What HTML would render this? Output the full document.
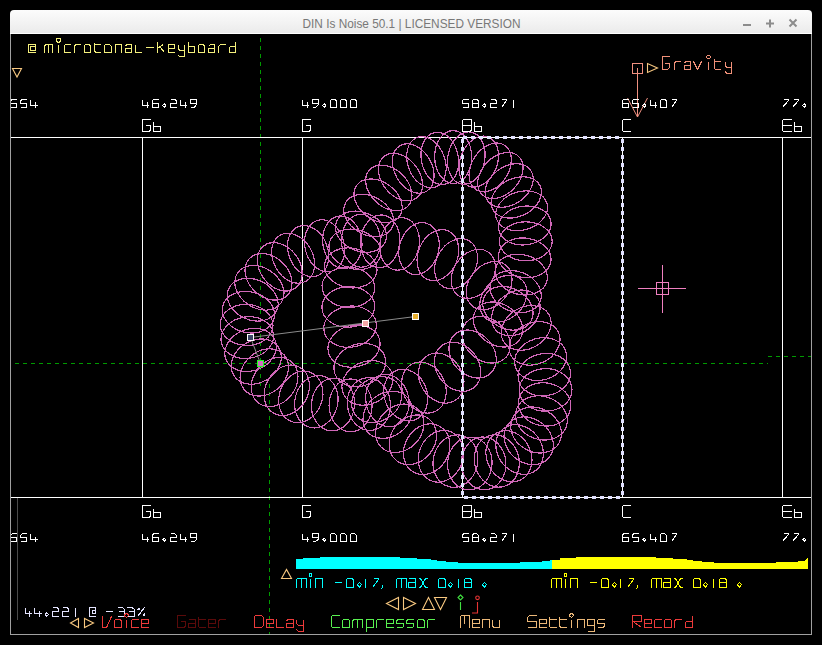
<!DOCTYPE html>
<html><head><meta charset="utf-8"><style>
html,body{margin:0;padding:0;background:#000;width:822px;height:645px;overflow:hidden}
svg{display:block}
</style></head><body>
<svg width="822" height="645" viewBox="0 0 822 645">
<rect width="822" height="645" fill="#000"/>
<defs><linearGradient id="tb" x1="0" y1="0" x2="0" y2="1"><stop offset="0" stop-color="#fcfcfc"/><stop offset="1" stop-color="#eaeaea"/></linearGradient><clipPath id="win"><rect x="11" y="34" width="800" height="600"/></clipPath></defs>
<path d="M10,34 V14 Q10,10 14,10 H808 Q812,10 812,14 V34 Z" fill="url(#tb)"/>
<rect x="10" y="33" width="802" height="1" fill="#ffffff"/>
<text x="302.5" y="28" font-family="Liberation Sans" font-size="12.8px" fill="#787878" textLength="218" lengthAdjust="spacingAndGlyphs">DIN Is Noise 50.1 | LICENSED VERSION</text>
<rect x="743" y="24" width="8" height="2" fill="#8c8c8c"/>
<path d="M770,19.5 V27.5 M766,23.5 H774" stroke="#8c8c8c" stroke-width="2"/>
<path d="M789.5,19.5 L796.5,26.5 M796.5,19.5 L789.5,26.5" stroke="#8c8c8c" stroke-width="2"/>
<rect x="10" y="34" width="1" height="601" fill="#a0a0a0"/>
<rect x="811" y="34" width="1" height="601" fill="#a0a0a0"/>
<rect x="10" y="634" width="802" height="1" fill="#a0a0a0"/>
<g clip-path="url(#win)">
<path d="M260.5,38 V386" stroke="#009a00" stroke-width="1" stroke-dasharray="4 4"/>
<path d="M269.5,384 V634" stroke="#009a00" stroke-width="1" stroke-dasharray="4 4"/>
<path d="M15,363.5 H768" stroke="#009a00" stroke-width="1" stroke-dasharray="4 4"/>
<path d="M768,356.5 H811" stroke="#009a00" stroke-width="1" stroke-dasharray="4 4"/>
<path d="M11,137.5 H811 M11,497.5 H811 M142.5,137 V497 M302.5,137 V497 M462.5,137 V497 M622.5,137 V497 M782.5,137 V497" stroke="#ffffff" stroke-width="1"/>
<rect x="17" y="498" width="1" height="122" fill="#4a4a4a"/>
<g fill="none" stroke="#d068b8" stroke-width="1.2" shape-rendering="crispEdges"><ellipse cx="437.9" cy="255.2" rx="19.7" ry="26.4" transform="rotate(22.1 437.9 255.2)"/><ellipse cx="456.1" cy="263.7" rx="19.8" ry="26.4" transform="rotate(27.9 456.1 263.7)"/><ellipse cx="473.3" cy="273.9" rx="19.9" ry="26.4" transform="rotate(33.7 473.3 273.9)"/><ellipse cx="489.1" cy="285.6" rx="20.1" ry="26.4" transform="rotate(39.6 489.1 285.6)"/><ellipse cx="503.4" cy="298.7" rx="20.2" ry="26.4" transform="rotate(45.6 503.4 298.7)"/><ellipse cx="515.8" cy="312.9" rx="20.4" ry="26.4" transform="rotate(51.9 515.8 312.9)"/><ellipse cx="526.2" cy="327.9" rx="20.6" ry="26.4" transform="rotate(58.5 526.2 327.9)"/><ellipse cx="534.5" cy="343.4" rx="20.7" ry="26.4" transform="rotate(65.4 534.5 343.4)"/><ellipse cx="540.6" cy="359.1" rx="20.9" ry="26.4" transform="rotate(72.8 540.6 359.1)"/><ellipse cx="544.3" cy="374.7" rx="21.1" ry="26.4" transform="rotate(80.7 544.3 374.7)"/><ellipse cx="545.6" cy="389.9" rx="21.3" ry="26.4" transform="rotate(89.3 545.6 389.9)"/><ellipse cx="544.6" cy="404.4" rx="21.5" ry="26.4" transform="rotate(98.5 544.6 404.4)"/><ellipse cx="541.4" cy="417.9" rx="21.6" ry="26.4" transform="rotate(108.5 541.4 417.9)"/><ellipse cx="536.1" cy="430.0" rx="21.8" ry="26.4" transform="rotate(119.1 536.1 430.0)"/><ellipse cx="528.7" cy="440.7" rx="21.9" ry="26.4" transform="rotate(130.3 528.7 440.7)"/><ellipse cx="519.6" cy="449.5" rx="22.0" ry="26.4" transform="rotate(141.7 519.6 449.5)"/><ellipse cx="508.9" cy="456.3" rx="22.1" ry="26.4" transform="rotate(153.2 508.9 456.3)"/><ellipse cx="496.8" cy="461.0" rx="22.2" ry="26.4" transform="rotate(164.3 496.8 461.0)"/><ellipse cx="483.7" cy="463.4" rx="22.2" ry="26.4" transform="rotate(174.8 483.7 463.4)"/><ellipse cx="469.8" cy="463.5" rx="22.2" ry="26.4" transform="rotate(-175.3 469.8 463.5)"/><ellipse cx="455.5" cy="461.1" rx="22.2" ry="26.4" transform="rotate(-166.1 455.5 461.1)"/><ellipse cx="441.0" cy="456.3" rx="22.1" ry="26.4" transform="rotate(-157.6 441.0 456.3)"/><ellipse cx="426.7" cy="449.2" rx="22.0" ry="26.4" transform="rotate(-149.7 426.7 449.2)"/><ellipse cx="412.8" cy="439.8" rx="21.9" ry="26.4" transform="rotate(-142.3 412.8 439.8)"/><ellipse cx="399.7" cy="428.3" rx="21.8" ry="26.4" transform="rotate(-135.3 399.7 428.3)"/><ellipse cx="387.6" cy="414.8" rx="21.6" ry="26.4" transform="rotate(-128.6 387.6 414.8)"/><ellipse cx="376.8" cy="399.6" rx="21.4" ry="26.4" transform="rotate(-122.3 376.8 399.6)"/><ellipse cx="367.4" cy="382.9" rx="21.2" ry="26.4" transform="rotate(-116.1 367.4 382.9)"/><ellipse cx="359.8" cy="365.0" rx="21.0" ry="26.4" transform="rotate(-110.1 359.8 365.0)"/><ellipse cx="354.0" cy="346.1" rx="20.8" ry="26.4" transform="rotate(-104.2 354.0 346.1)"/><ellipse cx="350.1" cy="326.7" rx="20.5" ry="26.4" transform="rotate(-98.3 350.1 326.7)"/><ellipse cx="348.3" cy="306.9" rx="20.3" ry="26.4" transform="rotate(-92.4 348.3 306.9)"/><ellipse cx="348.4" cy="287.2" rx="20.1" ry="26.4" transform="rotate(-86.4 348.4 287.2)"/><ellipse cx="350.7" cy="267.9" rx="19.8" ry="26.4" transform="rotate(-80.4 350.7 267.9)"/><ellipse cx="354.9" cy="249.3" rx="19.6" ry="26.4" transform="rotate(-74.2 354.9 249.3)"/><ellipse cx="360.9" cy="231.7" rx="19.4" ry="26.4" transform="rotate(-67.7 360.9 231.7)"/><ellipse cx="368.7" cy="215.5" rx="19.2" ry="26.4" transform="rotate(-61.0 368.7 215.5)"/><ellipse cx="378.1" cy="200.8" rx="19.0" ry="26.4" transform="rotate(-53.9 378.1 200.8)"/><ellipse cx="388.8" cy="187.9" rx="18.9" ry="26.4" transform="rotate(-46.4 388.8 187.9)"/><ellipse cx="400.5" cy="177.1" rx="18.8" ry="26.4" transform="rotate(-38.5 400.5 177.1)"/><ellipse cx="413.2" cy="168.5" rx="18.7" ry="26.4" transform="rotate(-29.9 413.2 168.5)"/><ellipse cx="426.4" cy="162.2" rx="18.6" ry="26.4" transform="rotate(-20.8 426.4 162.2)"/><ellipse cx="439.8" cy="158.4" rx="18.5" ry="26.4" transform="rotate(-11.0 439.8 158.4)"/><ellipse cx="453.2" cy="157.0" rx="18.5" ry="26.4" transform="rotate(-0.6 453.2 157.0)"/><ellipse cx="466.3" cy="158.1" rx="18.5" ry="26.4" transform="rotate(10.2 466.3 158.1)"/><ellipse cx="478.7" cy="161.6" rx="18.6" ry="26.4" transform="rotate(21.4 478.7 161.6)"/><ellipse cx="490.2" cy="167.4" rx="18.6" ry="26.4" transform="rotate(32.5 490.2 167.4)"/><ellipse cx="500.4" cy="175.5" rx="18.7" ry="26.4" transform="rotate(43.5 500.4 175.5)"/><ellipse cx="509.2" cy="185.5" rx="18.9" ry="26.4" transform="rotate(54.0 509.2 185.5)"/><ellipse cx="516.3" cy="197.4" rx="19.0" ry="26.4" transform="rotate(63.9 516.3 197.4)"/><ellipse cx="521.6" cy="210.8" rx="19.2" ry="26.4" transform="rotate(73.3 521.6 210.8)"/><ellipse cx="524.8" cy="225.5" rx="19.3" ry="26.4" transform="rotate(82.0 524.8 225.5)"/><ellipse cx="525.8" cy="241.3" rx="19.5" ry="26.4" transform="rotate(90.1 525.8 241.3)"/><ellipse cx="524.7" cy="257.8" rx="19.7" ry="26.4" transform="rotate(97.7 524.7 257.8)"/><ellipse cx="521.3" cy="274.6" rx="19.9" ry="26.4" transform="rotate(104.9 521.3 274.6)"/><ellipse cx="515.7" cy="291.6" rx="20.1" ry="26.4" transform="rotate(111.7 515.7 291.6)"/><ellipse cx="507.9" cy="308.3" rx="20.3" ry="26.4" transform="rotate(118.3 507.9 308.3)"/><ellipse cx="498.0" cy="324.5" rx="20.5" ry="26.4" transform="rotate(124.5 498.0 324.5)"/><ellipse cx="486.2" cy="339.8" rx="20.7" ry="26.4" transform="rotate(130.6 486.2 339.8)"/><ellipse cx="472.6" cy="354.0" rx="20.9" ry="26.4" transform="rotate(136.6 472.6 354.0)"/><ellipse cx="457.6" cy="366.8" rx="21.0" ry="26.4" transform="rotate(142.5 457.6 366.8)"/><ellipse cx="441.2" cy="378.1" rx="21.2" ry="26.4" transform="rotate(148.4 441.2 378.1)"/><ellipse cx="423.9" cy="387.6" rx="21.3" ry="26.4" transform="rotate(154.3 423.9 387.6)"/><ellipse cx="405.8" cy="395.1" rx="21.4" ry="26.4" transform="rotate(160.3 405.8 395.1)"/><ellipse cx="387.4" cy="400.6" rx="21.4" ry="26.4" transform="rotate(166.4 387.4 400.6)"/><ellipse cx="368.9" cy="404.1" rx="21.5" ry="26.4" transform="rotate(172.7 368.9 404.1)"/><ellipse cx="350.6" cy="405.3" rx="21.5" ry="26.4" transform="rotate(179.3 350.6 405.3)"/><ellipse cx="333.0" cy="404.5" rx="21.5" ry="26.4" transform="rotate(-173.9 333.0 404.5)"/><ellipse cx="316.3" cy="401.7" rx="21.4" ry="26.4" transform="rotate(-166.6 316.3 401.7)"/><ellipse cx="300.8" cy="396.9" rx="21.4" ry="26.4" transform="rotate(-158.8 300.8 396.9)"/><ellipse cx="286.8" cy="390.3" rx="21.3" ry="26.4" transform="rotate(-150.5 286.8 390.3)"/><ellipse cx="274.6" cy="382.0" rx="21.2" ry="26.4" transform="rotate(-141.5 274.6 382.0)"/><ellipse cx="264.3" cy="372.4" rx="21.1" ry="26.4" transform="rotate(-131.8 264.3 372.4)"/><ellipse cx="256.3" cy="361.6" rx="21.0" ry="26.4" transform="rotate(-121.4 256.3 361.6)"/><ellipse cx="250.6" cy="349.9" rx="20.8" ry="26.4" transform="rotate(-110.5 250.6 349.9)"/><ellipse cx="247.3" cy="337.6" rx="20.7" ry="26.4" transform="rotate(-99.1 247.3 337.6)"/><ellipse cx="246.6" cy="324.9" rx="20.5" ry="26.4" transform="rotate(-87.6 246.6 324.9)"/><ellipse cx="248.4" cy="312.2" rx="20.4" ry="26.4" transform="rotate(-76.4 248.4 312.2)"/><ellipse cx="252.7" cy="299.7" rx="20.2" ry="26.4" transform="rotate(-65.6 252.7 299.7)"/><ellipse cx="259.4" cy="287.8" rx="20.1" ry="26.4" transform="rotate(-55.4 259.4 287.8)"/><ellipse cx="268.5" cy="276.8" rx="19.9" ry="26.4" transform="rotate(-45.9 268.5 276.8)"/><ellipse cx="279.8" cy="266.8" rx="19.8" ry="26.4" transform="rotate(-37.2 279.8 266.8)"/><ellipse cx="293.1" cy="258.2" rx="19.7" ry="26.4" transform="rotate(-29.1 293.1 258.2)"/><ellipse cx="308.1" cy="251.1" rx="19.6" ry="26.4" transform="rotate(-21.5 308.1 251.1)"/><ellipse cx="324.6" cy="245.8" rx="19.6" ry="26.4" transform="rotate(-14.5 324.6 245.8)"/><ellipse cx="342.3" cy="242.3" rx="19.5" ry="26.4" transform="rotate(-7.8 342.3 242.3)"/><ellipse cx="361.0" cy="240.8" rx="19.5" ry="26.4" transform="rotate(-1.5 361.0 240.8)"/><ellipse cx="380.2" cy="241.3" rx="19.5" ry="26.4" transform="rotate(4.6 380.2 241.3)"/><ellipse cx="399.6" cy="243.9" rx="19.6" ry="26.4" transform="rotate(10.6 399.6 243.9)"/><ellipse cx="419.0" cy="248.6" rx="19.6" ry="26.4" transform="rotate(16.4 419.0 248.6)"/></g>
<path d="M462.5,139 V497.5 M462.5,137.5 H622.5 M622.5,139 V497.5 M464,497.5 H622.5" fill="none" stroke="#e0e0ff" stroke-width="3" stroke-dasharray="4 4" shape-rendering="crispEdges"/>
<path d="M250.5,337.5 L415.5,316.5 M250.5,337.5 L260.5,363.5" stroke="#8a8a8a" stroke-width="1"/>
<rect x="247.5" y="334.5" width="6" height="6" fill="#3c4466" stroke="#ffffff" stroke-width="1"/>
<rect x="257.5" y="360.5" width="6" height="6" fill="#d070c0" stroke="#20ff20" stroke-width="1"/>
<rect x="362.5" y="320.5" width="6" height="6" fill="#f4a8a8" stroke="#ffffff" stroke-width="1"/>
<rect x="412.5" y="313.5" width="6" height="6" fill="#e8b030" stroke="#ffffff" stroke-width="1"/>
<path d="M662.5,265 V313 M638,288.5 H686" stroke="#f080c0" stroke-width="1"/>
<rect x="656.5" y="282.5" width="12" height="12" fill="none" stroke="#f080c0" stroke-width="1"/>
<rect x="632.5" y="63.5" width="10" height="10" fill="none" stroke="#f09080" stroke-width="1"/>
<path d="M637.5,68 V117 M627.5,98 L637.5,117 L647.5,98" fill="none" stroke="#f09080" stroke-width="1"/>
<path d="M296,559.4 L303,559.4 L303,558 L320,558 L320,557 L400,557 L400,558 L417,558 L417,559 L431,559 L431,560 L437,560 L437,561 L446,561 L446,562 L458,562 L458,563 L520,563 L520,562 L535,562 L549,561 L551,559.5 L552,559.5 L552,569 L296,569 Z" fill="#00ffff" shape-rendering="crispEdges"/>
<path d="M552,559.5 L560,559.5 L560,558 L576,558 L576,557 L656,557 L656,558 L673,558 L673,559 L687,559 L687,560 L693,560 L693,561 L702,561 L702,562 L714,562 L714,563 L776,563 L776,562 L791,562 L805,561 L807,558 L808,558 L808,569 L552,569 Z" fill="#ffff00" shape-rendering="crispEdges"/>
<g fill="none" stroke="#f4f07c" stroke-width="1.1" stroke-linejoin="round" shape-rendering="crispEdges"><path d="M35.5,52.5 L28.5,52.5 L28.5,44.5 L35.5,44.5 L35.5,50.5 L30.5,50.5 L30.5,46.5 L35.5,46.5"/></g>
<g fill="none" stroke="#f4f07c" stroke-width="1.1" stroke-linejoin="round" shape-rendering="crispEdges"><path d="M44.5,52.5 L44.5,46.5 L45.5,44.5 L52.5,44.5 L52.5,52.5 M48.5,44.5 L48.5,52.5 M58.5,44.5 L58.5,52.5 M70.5,44.5 L65.5,44.5 L64.5,45.5 L64.5,52.5 L70.5,52.5 M74.5,52.5 L74.5,46.5 L75.5,44.5 L80.5,44.5 M84.5,44.5 L89.5,44.5 L90.5,46.5 L90.5,52.5 L84.5,52.5 L84.5,44.5 M94.5,42.5 L94.5,51.5 L96.5,52.5 L100.5,52.5 M94.5,44.5 L100.5,44.5 M104.5,44.5 L109.5,44.5 L111.5,46.5 L111.5,52.5 L104.5,52.5 L104.5,44.5 M115.5,52.5 L115.5,44.5 L121.5,44.5 L121.5,52.5 M125.5,46.5 L126.5,44.5 L131.5,44.5 L131.5,52.5 L125.5,52.5 L125.5,48.5 L131.5,48.5 M135.5,44.5 L135.5,52.5 L141.5,52.5 M145.5,47.5 L153.5,47.5 M157.5,41.5 L157.5,52.5 M163.5,44.5 L157.5,48.5 M160.5,47.5 L164.5,52.5 M168.5,48.5 L174.5,48.5 L174.5,44.5 L168.5,44.5 L168.5,52.5 L174.5,52.5 M178.5,44.5 L178.5,48.5 L179.5,50.5 L184.5,50.5 M184.5,44.5 L184.5,56.5 L179.5,56.5 L178.5,55.5 M188.5,41.5 L188.5,52.5 L194.5,52.5 L194.5,46.5 L188.5,46.5 M198.5,44.5 L203.5,44.5 L204.5,46.5 L204.5,52.5 L198.5,52.5 L198.5,44.5 M208.5,46.5 L210.5,44.5 L214.5,44.5 L214.5,52.5 L208.5,52.5 L208.5,48.5 L214.5,48.5 M218.5,52.5 L218.5,46.5 L220.5,44.5 L225.5,44.5 M235.5,41.5 L235.5,52.5 L229.5,52.5 L229.5,47.5 L230.5,46.5 L235.5,46.5"/><circle cx="58.5" cy="40.2" r="2.0"/></g>
<path d="M12.5,68.5 L21.5,68.5 L17,77 Z" fill="none" stroke="#f8c880" stroke-width="1.1"/>
<g fill="none" stroke="#ffffff" stroke-width="1.1" stroke-linejoin="round" shape-rendering="crispEdges"><path d="M16.5,99.5 L12.5,99.5 L10.5,100.5 L10.5,103.5 L16.5,103.5 L16.5,107.5 L10.5,107.5 M26.5,99.5 L22.5,99.5 L20.5,100.5 L20.5,103.5 L26.5,103.5 L26.5,107.5 L20.5,107.5 M30.5,99.5 L30.5,105.5 L37.5,105.5 M35.5,101.5 L35.5,107.5"/></g>
<g fill="none" stroke="#ffffff" stroke-width="1.1" stroke-linejoin="round" shape-rendering="crispEdges"><path d="M16.5,533.5 L12.5,533.5 L10.5,535.5 L10.5,537.5 L16.5,537.5 L16.5,541.5 L10.5,541.5 M26.5,533.5 L22.5,533.5 L20.5,535.5 L20.5,537.5 L26.5,537.5 L26.5,541.5 L20.5,541.5 M30.5,533.5 L30.5,539.5 L37.5,539.5 M35.5,536.5 L35.5,541.5"/></g>
<g fill="none" stroke="#ffffff" stroke-width="1.1" stroke-linejoin="round" shape-rendering="crispEdges"><path d="M142.5,99.5 L142.5,105.5 L148.5,105.5 M147.5,101.5 L147.5,107.5 M158.5,99.5 L153.5,99.5 L152.5,100.5 L152.5,107.5 L158.5,107.5 L158.5,103.5 L152.5,103.5 M164.5,103.5 L165.5,105.5 L164.5,107.5 L162.5,105.5 L164.5,103.5 M170.5,99.5 L174.5,99.5 L176.5,100.5 L176.5,103.5 L170.5,103.5 L170.5,107.5 L176.5,107.5 M180.5,99.5 L180.5,105.5 L186.5,105.5 M185.5,101.5 L185.5,107.5 M190.5,103.5 L190.5,99.5 L196.5,99.5 L196.5,104.5 L194.5,107.5 L190.5,107.5 M190.5,103.5 L196.5,103.5"/></g>
<g fill="none" stroke="#ffffff" stroke-width="1.1" stroke-linejoin="round" shape-rendering="crispEdges"><path d="M142.5,533.5 L142.5,539.5 L148.5,539.5 M147.5,536.5 L147.5,541.5 M158.5,533.5 L153.5,533.5 L152.5,535.5 L152.5,541.5 L158.5,541.5 L158.5,537.5 L152.5,537.5 M164.5,538.5 L165.5,539.5 L164.5,541.5 L162.5,539.5 L164.5,538.5 M170.5,533.5 L174.5,533.5 L176.5,535.5 L176.5,537.5 L170.5,537.5 L170.5,541.5 L176.5,541.5 M180.5,533.5 L180.5,539.5 L186.5,539.5 M185.5,536.5 L185.5,541.5 M190.5,537.5 L190.5,533.5 L196.5,533.5 L196.5,539.5 L194.5,541.5 L190.5,541.5 M190.5,537.5 L196.5,537.5"/></g>
<g fill="none" stroke="#ffffff" stroke-width="1.1" stroke-linejoin="round" shape-rendering="crispEdges"><path d="M302.5,99.5 L302.5,105.5 L308.5,105.5 M307.5,101.5 L307.5,107.5 M312.5,103.5 L312.5,99.5 L318.5,99.5 L318.5,104.5 L315.5,107.5 L312.5,107.5 M312.5,103.5 L318.5,103.5 M324.5,103.5 L325.5,105.5 L324.5,107.5 L322.5,105.5 L324.5,103.5 M330.5,99.5 L334.5,99.5 L336.5,100.5 L336.5,107.5 L330.5,107.5 L330.5,99.5 M340.5,99.5 L344.5,99.5 L346.5,100.5 L346.5,107.5 L340.5,107.5 L340.5,99.5 M350.5,99.5 L354.5,99.5 L356.5,100.5 L356.5,107.5 L350.5,107.5 L350.5,99.5"/></g>
<g fill="none" stroke="#ffffff" stroke-width="1.1" stroke-linejoin="round" shape-rendering="crispEdges"><path d="M302.5,533.5 L302.5,539.5 L308.5,539.5 M307.5,536.5 L307.5,541.5 M312.5,537.5 L312.5,533.5 L318.5,533.5 L318.5,539.5 L315.5,541.5 L312.5,541.5 M312.5,537.5 L318.5,537.5 M324.5,538.5 L325.5,539.5 L324.5,541.5 L322.5,539.5 L324.5,538.5 M330.5,533.5 L334.5,533.5 L336.5,535.5 L336.5,541.5 L330.5,541.5 L330.5,533.5 M340.5,533.5 L344.5,533.5 L346.5,535.5 L346.5,541.5 L340.5,541.5 L340.5,533.5 M350.5,533.5 L354.5,533.5 L356.5,535.5 L356.5,541.5 L350.5,541.5 L350.5,533.5"/></g>
<g fill="none" stroke="#ffffff" stroke-width="1.1" stroke-linejoin="round" shape-rendering="crispEdges"><path d="M468.5,99.5 L463.5,99.5 L462.5,100.5 L462.5,103.5 L468.5,103.5 L468.5,107.5 L462.5,107.5 M473.5,99.5 L476.5,99.5 L478.5,100.5 L478.5,107.5 L472.5,107.5 L472.5,100.5 L473.5,99.5 M472.5,103.5 L478.5,103.5 M484.5,103.5 L485.5,105.5 L484.5,107.5 L482.5,105.5 L484.5,103.5 M490.5,99.5 L494.5,99.5 L496.5,100.5 L496.5,103.5 L490.5,103.5 L490.5,107.5 L496.5,107.5 M501.5,99.5 L506.5,99.5 L506.5,100.5 L501.5,107.5 M513.5,99.5 L513.5,107.5"/></g>
<g fill="none" stroke="#ffffff" stroke-width="1.1" stroke-linejoin="round" shape-rendering="crispEdges"><path d="M468.5,533.5 L463.5,533.5 L462.5,535.5 L462.5,537.5 L468.5,537.5 L468.5,541.5 L462.5,541.5 M473.5,533.5 L476.5,533.5 L478.5,535.5 L478.5,541.5 L472.5,541.5 L472.5,535.5 L473.5,533.5 M472.5,537.5 L478.5,537.5 M484.5,538.5 L485.5,539.5 L484.5,541.5 L482.5,539.5 L484.5,538.5 M490.5,533.5 L494.5,533.5 L496.5,535.5 L496.5,537.5 L490.5,537.5 L490.5,541.5 L496.5,541.5 M501.5,533.5 L506.5,533.5 L506.5,534.5 L501.5,541.5 M513.5,533.5 L513.5,541.5"/></g>
<g fill="none" stroke="#ffffff" stroke-width="1.1" stroke-linejoin="round" shape-rendering="crispEdges"><path d="M628.5,99.5 L623.5,99.5 L622.5,100.5 L622.5,107.5 L628.5,107.5 L628.5,103.5 L622.5,103.5 M638.5,99.5 L633.5,99.5 L632.5,100.5 L632.5,103.5 L638.5,103.5 L638.5,107.5 L632.5,107.5 M644.5,103.5 L645.5,105.5 L644.5,107.5 L642.5,105.5 L644.5,103.5 M650.5,99.5 L650.5,105.5 L656.5,105.5 M655.5,101.5 L655.5,107.5 M660.5,99.5 L664.5,99.5 L666.5,100.5 L666.5,107.5 L660.5,107.5 L660.5,99.5 M671.5,99.5 L676.5,99.5 L676.5,100.5 L671.5,107.5"/></g>
<g fill="none" stroke="#ffffff" stroke-width="1.1" stroke-linejoin="round" shape-rendering="crispEdges"><path d="M628.5,533.5 L623.5,533.5 L622.5,535.5 L622.5,541.5 L628.5,541.5 L628.5,537.5 L622.5,537.5 M638.5,533.5 L633.5,533.5 L632.5,535.5 L632.5,537.5 L638.5,537.5 L638.5,541.5 L632.5,541.5 M644.5,538.5 L645.5,539.5 L644.5,541.5 L642.5,539.5 L644.5,538.5 M650.5,533.5 L650.5,539.5 L656.5,539.5 M655.5,536.5 L655.5,541.5 M660.5,533.5 L664.5,533.5 L666.5,535.5 L666.5,541.5 L660.5,541.5 L660.5,533.5 M671.5,533.5 L676.5,533.5 L676.5,534.5 L671.5,541.5"/></g>
<g fill="none" stroke="#ffffff" stroke-width="1.1" stroke-linejoin="round" shape-rendering="crispEdges"><path d="M783.5,99.5 L788.5,99.5 L788.5,100.5 L782.5,107.5 M793.5,99.5 L798.5,99.5 L798.5,100.5 L792.5,107.5 M804.5,103.5 L805.5,105.5 L804.5,107.5 L802.5,105.5 L804.5,103.5"/></g>
<g fill="none" stroke="#ffffff" stroke-width="1.1" stroke-linejoin="round" shape-rendering="crispEdges"><path d="M783.5,533.5 L788.5,533.5 L788.5,534.5 L782.5,541.5 M793.5,533.5 L798.5,533.5 L798.5,534.5 L792.5,541.5 M804.5,538.5 L805.5,539.5 L804.5,541.5 L802.5,539.5 L804.5,538.5"/></g>
<g fill="none" stroke="#ffffff" stroke-width="1.1" stroke-linejoin="round" shape-rendering="crispEdges"><path d="M150.5,119.5 L142.5,119.5 L142.5,131.5 L148.5,131.5 L150.5,130.5 L150.5,125.5 L145.5,125.5 M153.5,121.5 L153.5,131.5 L160.5,131.5 L160.5,126.5 L153.5,126.5"/></g>
<g fill="none" stroke="#ffffff" stroke-width="1.1" stroke-linejoin="round" shape-rendering="crispEdges"><path d="M150.5,505.5 L142.5,505.5 L142.5,517.5 L148.5,517.5 L150.5,516.5 L150.5,511.5 L145.5,511.5 M153.5,508.5 L153.5,517.5 L160.5,517.5 L160.5,512.5 L153.5,512.5"/></g>
<g fill="none" stroke="#ffffff" stroke-width="1.1" stroke-linejoin="round" shape-rendering="crispEdges"><path d="M310.5,119.5 L302.5,119.5 L302.5,131.5 L308.5,131.5 L310.5,130.5 L310.5,125.5 L305.5,125.5"/></g>
<g fill="none" stroke="#ffffff" stroke-width="1.1" stroke-linejoin="round" shape-rendering="crispEdges"><path d="M310.5,505.5 L302.5,505.5 L302.5,517.5 L308.5,517.5 L310.5,516.5 L310.5,511.5 L305.5,511.5"/></g>
<g fill="none" stroke="#ffffff" stroke-width="1.1" stroke-linejoin="round" shape-rendering="crispEdges"><path d="M462.5,119.5 L471.5,119.5 L471.5,130.5 L469.5,131.5 L462.5,131.5 L462.5,119.5 M462.5,125.5 L471.5,125.5 M474.5,121.5 L474.5,131.5 L481.5,131.5 L481.5,126.5 L474.5,126.5"/></g>
<g fill="none" stroke="#ffffff" stroke-width="1.1" stroke-linejoin="round" shape-rendering="crispEdges"><path d="M462.5,505.5 L471.5,505.5 L471.5,516.5 L469.5,517.5 L462.5,517.5 L462.5,505.5 M462.5,511.5 L471.5,511.5 M474.5,508.5 L474.5,517.5 L481.5,517.5 L481.5,512.5 L474.5,512.5"/></g>
<g fill="none" stroke="#ffffff" stroke-width="1.1" stroke-linejoin="round" shape-rendering="crispEdges"><path d="M630.5,119.5 L623.5,119.5 L622.5,120.5 L622.5,130.5 L623.5,131.5 L630.5,131.5"/></g>
<g fill="none" stroke="#ffffff" stroke-width="1.1" stroke-linejoin="round" shape-rendering="crispEdges"><path d="M630.5,505.5 L623.5,505.5 L622.5,506.5 L622.5,516.5 L623.5,517.5 L630.5,517.5"/></g>
<g fill="none" stroke="#ffffff" stroke-width="1.1" stroke-linejoin="round" shape-rendering="crispEdges"><path d="M791.5,119.5 L783.5,119.5 L782.5,120.5 L782.5,130.5 L783.5,131.5 L791.5,131.5 M782.5,125.5 L791.5,125.5 M794.5,121.5 L794.5,131.5 L801.5,131.5 L801.5,126.5 L794.5,126.5"/></g>
<g fill="none" stroke="#ffffff" stroke-width="1.1" stroke-linejoin="round" shape-rendering="crispEdges"><path d="M791.5,505.5 L783.5,505.5 L782.5,506.5 L782.5,516.5 L783.5,517.5 L791.5,517.5 M782.5,511.5 L791.5,511.5 M794.5,508.5 L794.5,517.5 L801.5,517.5 L801.5,512.5 L794.5,512.5"/></g>
<g fill="none" stroke="#f09078" stroke-width="1.1" stroke-linejoin="round" shape-rendering="crispEdges"><path d="M669.5,56.5 L662.5,56.5 L662.5,69.5 L667.5,69.5 L669.5,67.5 L669.5,63.5 L664.5,63.5 M674.5,69.5 L674.5,63.5 L675.5,61.5 L680.5,61.5 M684.5,63.5 L685.5,61.5 L690.5,61.5 L690.5,69.5 L684.5,69.5 L684.5,65.5 L690.5,65.5 M693.5,61.5 L697.5,69.5 L701.5,61.5 M708.5,61.5 L708.5,69.5 M714.5,58.5 L714.5,68.5 L715.5,69.5 L720.5,69.5 M714.5,61.5 L720.5,61.5 M725.5,61.5 L725.5,65.5 L726.5,67.5 L731.5,67.5 M731.5,61.5 L731.5,73.5 L726.5,73.5 L725.5,71.5"/><circle cx="708.5" cy="56.9" r="1.8"/></g>
<path d="M647.5,63.5 L647.5,72.5 L657.5,68 Z" fill="none" stroke="#f8c880" stroke-width="1.1"/>
<g fill="none" stroke="#00ffff" stroke-width="1.1" stroke-linejoin="round" shape-rendering="crispEdges"><path d="M296.5,587.5 L296.5,579.5 L297.5,578.5 L306.5,578.5 L306.5,587.5 M301.5,578.5 L301.5,587.5 M310.5,578.5 L310.5,587.5 M315.5,587.5 L315.5,578.5 L322.5,578.5 L322.5,587.5 M334.5,582.5 L341.5,582.5 M346.5,578.5 L351.5,578.5 L353.5,579.5 L353.5,587.5 L346.5,587.5 L346.5,578.5 M359.5,582.5 L361.5,584.5 L359.5,587.5 L357.5,584.5 L359.5,582.5 M365.5,578.5 L365.5,587.5 M373.5,578.5 L378.5,578.5 L378.5,579.5 L372.5,587.5 M382.5,584.5 L382.5,587.5 L380.5,589.5 M396.5,587.5 L396.5,579.5 L397.5,578.5 L406.5,578.5 L406.5,587.5 M401.5,578.5 L401.5,587.5 M408.5,579.5 L409.5,578.5 L415.5,578.5 L415.5,587.5 L408.5,587.5 L408.5,582.5 L415.5,582.5 M418.5,578.5 L420.5,578.5 L425.5,587.5 L427.5,587.5 M427.5,578.5 L425.5,578.5 L420.5,587.5 L418.5,587.5 M438.5,578.5 L443.5,578.5 L445.5,579.5 L445.5,587.5 L438.5,587.5 L438.5,578.5 M450.5,582.5 L452.5,584.5 L450.5,587.5 L448.5,584.5 L450.5,582.5 M458.5,578.5 L458.5,587.5 M465.5,578.5 L469.5,578.5 L471.5,579.5 L471.5,587.5 L464.5,587.5 L464.5,579.5 L465.5,578.5 M464.5,582.5 L471.5,582.5 M484.5,582.5 L486.5,584.5 L484.5,587.5 L482.5,584.5 L484.5,582.5"/><circle cx="310.5" cy="575.0" r="1.5"/></g>
<g fill="none" stroke="#ffff00" stroke-width="1.1" stroke-linejoin="round" shape-rendering="crispEdges"><path d="M551.5,587.5 L551.5,579.5 L552.5,578.5 L561.5,578.5 L561.5,587.5 M556.5,578.5 L556.5,587.5 M565.5,578.5 L565.5,587.5 M570.5,587.5 L570.5,578.5 L577.5,578.5 L577.5,587.5 M589.5,582.5 L596.5,582.5 M601.5,578.5 L606.5,578.5 L608.5,579.5 L608.5,587.5 L601.5,587.5 L601.5,578.5 M614.5,582.5 L616.5,584.5 L614.5,587.5 L612.5,584.5 L614.5,582.5 M620.5,578.5 L620.5,587.5 M628.5,578.5 L633.5,578.5 L633.5,579.5 L627.5,587.5 M637.5,584.5 L637.5,587.5 L635.5,589.5 M651.5,587.5 L651.5,579.5 L652.5,578.5 L661.5,578.5 L661.5,587.5 M656.5,578.5 L656.5,587.5 M663.5,579.5 L664.5,578.5 L670.5,578.5 L670.5,587.5 L663.5,587.5 L663.5,582.5 L670.5,582.5 M673.5,578.5 L675.5,578.5 L680.5,587.5 L682.5,587.5 M682.5,578.5 L680.5,578.5 L675.5,587.5 L673.5,587.5 M693.5,578.5 L698.5,578.5 L700.5,579.5 L700.5,587.5 L693.5,587.5 L693.5,578.5 M705.5,582.5 L707.5,584.5 L705.5,587.5 L703.5,584.5 L705.5,582.5 M713.5,578.5 L713.5,587.5 M720.5,578.5 L724.5,578.5 L726.5,579.5 L726.5,587.5 L719.5,587.5 L719.5,579.5 L720.5,578.5 M719.5,582.5 L726.5,582.5 M739.5,582.5 L741.5,584.5 L739.5,587.5 L737.5,584.5 L739.5,582.5"/><circle cx="565.5" cy="575.0" r="1.5"/></g>
<path d="M281.5,578.5 L286.5,569.5 L291.5,578.5 Z" fill="none" stroke="#f8c880" stroke-width="1.1"/>
<g fill="none" stroke="#e4e4ff" stroke-width="1.1" stroke-linejoin="round" shape-rendering="crispEdges"><path d="M25.5,607.5 L25.5,613.5 L31.5,613.5 M29.5,610.5 L29.5,616.5 M34.5,607.5 L34.5,613.5 L41.5,613.5 M39.5,610.5 L39.5,616.5 M46.5,612.5 L48.5,614.5 L46.5,616.5 L45.5,614.5 L46.5,612.5 M52.5,607.5 L57.5,607.5 L58.5,609.5 L58.5,611.5 L52.5,611.5 L52.5,616.5 L58.5,616.5 M62.5,607.5 L67.5,607.5 L68.5,609.5 L68.5,611.5 L62.5,611.5 L62.5,616.5 L68.5,616.5 M75.5,607.5 L75.5,616.5"/></g>
<g fill="none" stroke="#e4e4ff" stroke-width="1.1" stroke-linejoin="round" shape-rendering="crispEdges"><path d="M95.5,616.5 L89.5,616.5 L89.5,607.5 L95.5,607.5 L95.5,613.5 L92.5,613.5 L92.5,610.5 L95.5,610.5"/></g>
<g fill="none" stroke="#e4e4ff" stroke-width="1.1" stroke-linejoin="round" shape-rendering="crispEdges"><path d="M105.5,611.5 L112.5,611.5"/></g>
<g fill="none" stroke="#e4e4ff" stroke-width="1.1" stroke-linejoin="round" shape-rendering="crispEdges"><path d="M117.5,607.5 L122.5,607.5 L124.5,609.5 L124.5,616.5 L117.5,616.5 M118.5,611.5 L124.5,611.5"/></g>
<g fill="none" stroke="#e4e4ff" stroke-width="1.1" stroke-linejoin="round" shape-rendering="crispEdges"><path d="M126.5,607.5 L131.5,607.5 L134.5,609.5 L134.5,616.5 L126.5,616.5 M128.5,611.5 L134.5,611.5"/></g>
<g fill="none" stroke="#e4e4ff" stroke-width="1.1" stroke-linejoin="round" shape-rendering="crispEdges"><path d="M137.5,616.5 L144.5,607.5 M137.5,608.5 L139.5,608.5 L139.5,609.5 L137.5,609.5 L137.5,608.5 M143.5,613.5 L144.5,613.5 L144.5,615.5 L143.5,615.5 L143.5,613.5"/></g>
<path d="M386.5,603.5 L398.5,597.5 L398.5,609.5 Z" fill="none" stroke="#f8c880" stroke-width="1.1"/>
<path d="M403.5,597.5 L403.5,609.5 L415.5,603.5 Z" fill="none" stroke="#f8c880" stroke-width="1.1"/>
<path d="M422.5,609.5 L428.5,597.5 L434.5,609.5 Z" fill="none" stroke="#f8c880" stroke-width="1.1"/>
<path d="M434.5,597.5 L446.5,597.5 L440.5,609.5 Z" fill="none" stroke="#f8c880" stroke-width="1.1"/>
<path d="M460.5,602 V610 M460.5,595 L463,597.5 L460.5,600 L458,597.5 Z" fill="none" stroke="#40e040" stroke-width="1.1"/>
<path d="M477.5,602 V613 H472" fill="none" stroke="#e83434" stroke-width="1.1"/><circle cx="477.5" cy="597.8" r="1.8" fill="none" stroke="#e83434" stroke-width="1.1"/>
<path d="M70.5,623 L78.5,618.5 L78.5,627.5 Z" fill="none" stroke="#f8c880" stroke-width="1.1"/>
<path d="M84.5,618.5 L84.5,627.5 L93.5,623 Z" fill="none" stroke="#f8c880" stroke-width="1.1"/>
<g fill="none" stroke="#ec3a3a" stroke-width="1.1" stroke-linejoin="round" shape-rendering="crispEdges"><path d="M102.5,615.5 L102.5,627.5 L106.5,627.5 L111.5,616.5 L111.5,615.5 M114.5,619.5 L119.5,619.5 L121.5,620.5 L121.5,627.5 L114.5,627.5 L114.5,619.5 M126.5,619.5 L126.5,627.5 M138.5,619.5 L132.5,619.5 L131.5,620.5 L131.5,627.5 L138.5,627.5 M141.5,623.5 L148.5,623.5 L148.5,619.5 L141.5,619.5 L141.5,627.5 L148.5,627.5"/><circle cx="126.5" cy="615.4" r="1.8"/></g>
<g fill="none" stroke="#5a0a0a" stroke-width="1.1" stroke-linejoin="round" shape-rendering="crispEdges"><path d="M185.5,615.5 L177.5,615.5 L177.5,627.5 L183.5,627.5 L185.5,626.5 L185.5,621.5 L180.5,621.5 M188.5,620.5 L189.5,619.5 L195.5,619.5 L195.5,627.5 L188.5,627.5 L188.5,623.5 L195.5,623.5 M198.5,616.5 L198.5,626.5 L199.5,627.5 L205.5,627.5 M198.5,619.5 L205.5,619.5 M208.5,623.5 L215.5,623.5 L215.5,619.5 L208.5,619.5 L208.5,627.5 L215.5,627.5 M218.5,627.5 L218.5,620.5 L220.5,619.5 L225.5,619.5"/></g>
<g fill="none" stroke="#ec3a3a" stroke-width="1.1" stroke-linejoin="round" shape-rendering="crispEdges"><path d="M254.5,615.5 L261.5,615.5 L263.5,617.5 L263.5,625.5 L261.5,627.5 L254.5,627.5 L254.5,615.5 M266.5,623.5 L273.5,623.5 L273.5,619.5 L266.5,619.5 L266.5,627.5 L273.5,627.5 M276.5,618.5 L276.5,627.5 L283.5,627.5 M286.5,620.5 L288.5,619.5 L293.5,619.5 L293.5,627.5 L286.5,627.5 L286.5,623.5 L293.5,623.5 M296.5,619.5 L296.5,623.5 L298.5,625.5 L303.5,625.5 M303.5,619.5 L303.5,631.5 L298.5,631.5 L296.5,629.5"/></g>
<g fill="none" stroke="#58f050" stroke-width="1.1" stroke-linejoin="round" shape-rendering="crispEdges"><path d="M339.5,615.5 L332.5,615.5 L331.5,616.5 L331.5,626.5 L332.5,627.5 L339.5,627.5 M342.5,619.5 L348.5,619.5 L349.5,620.5 L349.5,627.5 L342.5,627.5 L342.5,619.5 M352.5,627.5 L352.5,620.5 L354.5,619.5 L362.5,619.5 L362.5,627.5 M357.5,619.5 L357.5,627.5 M366.5,631.5 L366.5,619.5 L373.5,619.5 L373.5,627.5 L366.5,627.5 M376.5,627.5 L376.5,620.5 L377.5,619.5 L383.5,619.5 M386.5,623.5 L393.5,623.5 L393.5,619.5 L386.5,619.5 L386.5,627.5 L393.5,627.5 M403.5,619.5 L398.5,619.5 L396.5,620.5 L396.5,623.5 L403.5,623.5 L403.5,626.5 L402.5,627.5 L396.5,627.5 M413.5,619.5 L408.5,619.5 L406.5,620.5 L406.5,623.5 L413.5,623.5 L413.5,626.5 L412.5,627.5 L406.5,627.5 M417.5,619.5 L422.5,619.5 L424.5,620.5 L424.5,627.5 L417.5,627.5 L417.5,619.5 M427.5,627.5 L427.5,620.5 L428.5,619.5 L434.5,619.5"/></g>
<g fill="none" stroke="#ecb878" stroke-width="1.1" stroke-linejoin="round" shape-rendering="crispEdges"><path d="M460.5,627.5 L460.5,616.5 L461.5,615.5 L469.5,615.5 L469.5,627.5 M464.5,615.5 L464.5,623.5 M472.5,623.5 L479.5,623.5 L479.5,619.5 L472.5,619.5 L472.5,627.5 L479.5,627.5 M482.5,627.5 L482.5,619.5 L489.5,619.5 L489.5,627.5 M492.5,619.5 L492.5,626.5 L494.5,627.5 L499.5,627.5 L499.5,619.5"/></g>
<g fill="none" stroke="#ecb878" stroke-width="1.1" stroke-linejoin="round" shape-rendering="crispEdges"><path d="M536.5,615.5 L529.5,615.5 L527.5,617.5 L527.5,621.5 L536.5,621.5 L536.5,627.5 L527.5,627.5 M539.5,623.5 L546.5,623.5 L546.5,619.5 L539.5,619.5 L539.5,627.5 L546.5,627.5 M549.5,616.5 L549.5,626.5 L550.5,627.5 L556.5,627.5 M549.5,619.5 L556.5,619.5 M559.5,616.5 L559.5,626.5 L561.5,627.5 L566.5,627.5 M559.5,619.5 L566.5,619.5 M571.5,619.5 L571.5,627.5 M577.5,627.5 L577.5,619.5 L584.5,619.5 L584.5,627.5 M594.5,625.5 L587.5,625.5 L587.5,619.5 L594.5,619.5 L594.5,631.5 L587.5,631.5 M604.5,619.5 L598.5,619.5 L597.5,620.5 L597.5,623.5 L604.5,623.5 L604.5,626.5 L602.5,627.5 L597.5,627.5"/><circle cx="571.5" cy="615.4" r="1.8"/></g>
<g fill="none" stroke="#ec3a3a" stroke-width="1.1" stroke-linejoin="round" shape-rendering="crispEdges"><path d="M632.5,627.5 L632.5,615.5 L641.5,615.5 L641.5,621.5 L632.5,621.5 M634.5,622.5 L641.5,627.5 M644.5,623.5 L651.5,623.5 L651.5,619.5 L644.5,619.5 L644.5,627.5 L651.5,627.5 M661.5,619.5 L655.5,619.5 L654.5,620.5 L654.5,627.5 L661.5,627.5 M664.5,619.5 L670.5,619.5 L671.5,620.5 L671.5,627.5 L664.5,627.5 L664.5,619.5 M674.5,627.5 L674.5,620.5 L676.5,619.5 L681.5,619.5 M692.5,615.5 L692.5,627.5 L685.5,627.5 L685.5,622.5 L686.5,621.5 L692.5,621.5"/></g>
</g>
</svg>
</body></html>
